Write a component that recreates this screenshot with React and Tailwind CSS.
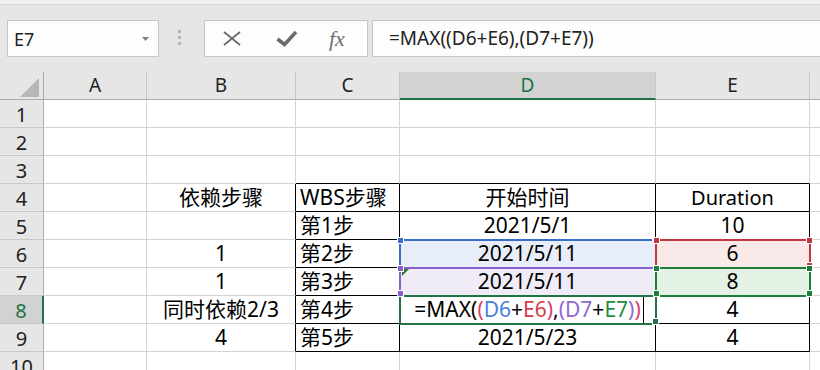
import React from "react";

const FONT = "font-['Noto_Sans','Noto_Sans_CJK_SC',sans-serif]";

const W = {
  A: "w-[103px]",
  B: "w-[149px]",
  C: "w-[104px]",
  D: "w-[256px]",
  E: "w-[154px]",
};

const rows = [
  { n: 1 },
  { n: 2 },
  { n: 3 },
  { n: 4, B: "依赖步骤", C: "WBS步骤", D: "开始时间", E: "Duration" },
  { n: 5, C: "第1步", D: "2021/5/1", E: "10" },
  { n: 6, B: "1", C: "第2步", D: "2021/5/11", E: "6" },
  { n: 7, B: "1", C: "第3步", D: "2021/5/11", E: "8" },
  { n: 8, B: "同时依赖2/3", C: "第4步", D: "FORMULA", E: "4" },
  { n: 9, B: "4", C: "第5步", D: "2021/5/23", E: "4" },
  { n: 10 },
];

const fills = {
  "D6": "bg-[#e8eef9]",
  "E6": "bg-[#f9e9e9]",
  "D7": "bg-[#f0ecf7]",
  "E7": "bg-[#e4f1e5]",
};

function Formula() {
  return (
    <span className="relative whitespace-nowrap">
      <span className="text-black">=MAX(</span>
      <span className="text-[#d4456a]">(</span>
      <span className="text-[#4a80dc]">D6</span>
      <span className="text-black">+</span>
      <span className="text-[#d93b4b]">E6</span>
      <span className="text-[#d4456a]">)</span>
      <span className="text-black">,</span>
      <span className="text-[#9067d2]">(</span>
      <span className="text-[#9067d2]">D7</span>
      <span className="text-black">+</span>
      <span className="text-[#1c8f3b]">E7</span>
      <span className="text-[#9067d2]">)</span>
      <span className="text-[#d4456a]">)</span>
      <span className="absolute -right-[3px] top-0 w-px h-[27px] bg-black" />
    </span>
  );
}

function Cell({ w, r, b, bg, align, children, extra }) {
  return (
    <div
      className={`relative flex items-center h-[28px] shrink-0 border-r border-b ${w} ${r} ${b} ${bg || ""} ${align} ${extra || ""}`}
    >
      {children}
    </div>
  );
}

function BodyRow({ row }) {
  const n = row.n;
  const inTable = n >= 4 && n <= 9;
  const tableBottom = n >= 3 && n <= 9;
  const rTable = inTable ? "border-r-black" : "border-r-[#d4d4d4]";
  const bTable = tableBottom ? "border-b-black" : "border-b-[#d4d4d4]";
  const gR = "border-r-[#d4d4d4]";
  const gB = "border-b-[#d4d4d4]";
  const is8 = n === 8;
  return (
    <div className="flex h-[28px]">
      <div
        className={`flex items-center justify-center w-[44px] h-[28px] shrink-0 border-b border-b-[#c8c8c8] text-[20px] leading-[27px] pt-[2px] ${
          is8
            ? "bg-[#d2d2d2] border-r-2 border-r-[#217346] text-[#217346]"
            : "bg-[#e6e6e6] border-r border-r-[#ababab] text-[#222]"
        }`}
      >
        {n}
      </div>
      <Cell w={W.A} r={gR} b={gB} align="justify-center" />
      <Cell w={W.B} r={rTable} b={gB} align="justify-center">
        {row.B}
      </Cell>
      <Cell w={W.C} r={rTable} b={bTable} align="justify-start" extra="pl-[4px]">
        {row.C}
      </Cell>
      <Cell w={W.D} r={rTable} b={bTable} bg={fills["D" + n]} align="justify-center">
        {row.D === "FORMULA" ? <Formula /> : row.D}
        {n === 7 && (
          <svg className="absolute left-[2px] top-[1px]" width="7" height="7" viewBox="0 0 7 7">
            <polygon points="0,0 7,0 0,7" fill="#1e7b34" />
          </svg>
        )}
      </Cell>
      <Cell w={W.E} r={rTable} b={bTable} bg={fills["E" + n]} align="justify-center">
        {row.E === "Duration" ? <span className="text-[20px]">Duration</span> : row.E}
      </Cell>
      <div className="flex-1 h-[28px] border-b border-b-[#d4d4d4]" />
    </div>
  );
}

const boxes = [
  "left-[399px] top-[139px] w-[258px] border-[#3a6fcc]",
  "left-[655px] top-[139px] w-[156px] border-[#c3373f]",
  "left-[399px] top-[167px] w-[258px] border-[#8a5fc6]",
  "left-[655px] top-[167px] w-[156px] border-[#1b7f37]",
];

const handles = [
  "left-[397px] top-[137px] bg-[#3a6fcc]",
  "left-[652px] top-[137px] bg-[#3a6fcc]",
  "left-[653px] top-[137px] bg-[#c3373f]",
  "left-[806px] top-[137px] bg-[#c3373f]",
  "left-[806px] top-[162px] bg-[#c3373f]",
  "left-[397px] top-[165px] bg-[#8a5fc6]",
  "left-[397px] top-[190px] bg-[#8a5fc6]",
  "left-[653px] top-[165px] bg-[#1b7f37]",
  "left-[806px] top-[165px] bg-[#1b7f37]",
  "left-[653px] top-[190px] bg-[#1b7f37]",
  "left-[806px] top-[190px] bg-[#1b7f37]",
  "left-[652px] top-[218px] bg-[#217346]",
];

export default function App() {
  return (
    <div className={`w-[820px] h-[370px] overflow-hidden bg-[#e6e6e6] ${FONT}`}>
      {/* toolbar */}
      <div className="h-[72px] bg-[#e6e6e6]">
        <div className="h-[5px] bg-[#f1f1f1] border-b border-[#d5d5d5]" />
        <div className="flex items-start mt-[15px]">
          <div className="ml-[7px] w-[152px] h-[37px] bg-[#fdfdfd] border border-[#c6c6c6] flex items-center justify-between pl-[6px] pr-[9px]">
            <span className="text-[18px] text-[#222] leading-none">E7</span>
            <svg width="7" height="4" viewBox="0 0 7 4">
              <polygon points="0,0 7,0 3.5,4" fill="#808080" />
            </svg>
          </div>
          <div className="w-[45px] h-[37px] flex flex-col gap-[3px] pl-[19px] pt-[10px]">
            <div className="w-[3px] h-[3px] bg-[#b5b5b5]" />
            <div className="w-[3px] h-[3px] bg-[#b5b5b5]" />
            <div className="w-[3px] h-[3px] bg-[#b5b5b5]" />
          </div>
          <div className="w-[164px] h-[37px] bg-[#fdfdfd] border border-[#c6c6c6] flex items-center pl-[18px]">
            <svg width="18" height="15" viewBox="0 0 18 15">
              <path d="M1 1 L17 14 M17 1 L1 14" stroke="#6b6b6b" strokeWidth="1.8" fill="none" />
            </svg>
            <svg className="ml-[35px]" width="22" height="17" viewBox="0 0 22 17">
              <path d="M1.5 9 L8.5 14.5 L20 2" stroke="#6b6b6b" strokeWidth="3.6" fill="none" />
            </svg>
            <span className="ml-[31px] font-['Liberation_Serif',serif] italic text-[22px] leading-none text-[#6e6e6e]">
              fx
            </span>
          </div>
          <div className="ml-[4px] flex-1 h-[37px] bg-[#fdfdfd] border border-r-0 border-[#c6c6c6] flex items-center pl-[16px]">
            <span className="text-[19px] text-[#222] leading-none whitespace-nowrap">=MAX((D6+E6),(D7+E7))</span>
          </div>
        </div>
      </div>

      {/* column header */}
      <div className="flex h-[28px] text-[19px] text-[#222]">
        <div className="relative w-[44px] h-[28px] shrink-0 border-r border-b border-[#ababab]">
          <svg className="absolute right-[4px] bottom-[2px]" width="19" height="19" viewBox="0 0 19 19">
            <polygon points="19,0 19,19 0,19" fill="#b7b7b7" />
          </svg>
        </div>
        <div className="w-[103px] h-[28px] shrink-0 flex items-center justify-center border-r border-r-[#c6c6c6] border-b border-b-[#ababab]">A</div>
        <div className="w-[149px] h-[28px] shrink-0 flex items-center justify-center border-r border-r-[#c6c6c6] border-b border-b-[#ababab]">B</div>
        <div className="w-[104px] h-[28px] shrink-0 flex items-center justify-center border-r border-r-[#c6c6c6] border-b border-b-[#ababab]">C</div>
        <div className="w-[256px] h-[28px] shrink-0 flex items-center justify-center bg-[#d2d2d2] border-r border-r-[#c6c6c6] border-b-2 border-b-[#217346] text-[#217346] pt-[1px]">D</div>
        <div className="w-[154px] h-[28px] shrink-0 flex items-center justify-center border-r border-r-[#c6c6c6] border-b border-b-[#ababab]">E</div>
        <div className="flex-1 h-[28px] border-b border-b-[#ababab]" />
      </div>

      {/* body */}
      <div className="relative bg-white text-[21px] leading-[27px] text-black">
        {rows.map((row) => (
          <BodyRow key={row.n} row={row} />
        ))}
        {boxes.map((c, i) => (
          <div key={i} className={`absolute h-[30px] border-2 ${c}`} />
        ))}
        <div className="absolute left-[399px] top-[195px] w-[258px] h-[30px] border-2 border-[#217346]" />
        {handles.map((c, i) => (
          <div key={i} className={`absolute w-[7px] h-[7px] border border-white ${c}`} />
        ))}
      </div>
    </div>
  );
}
